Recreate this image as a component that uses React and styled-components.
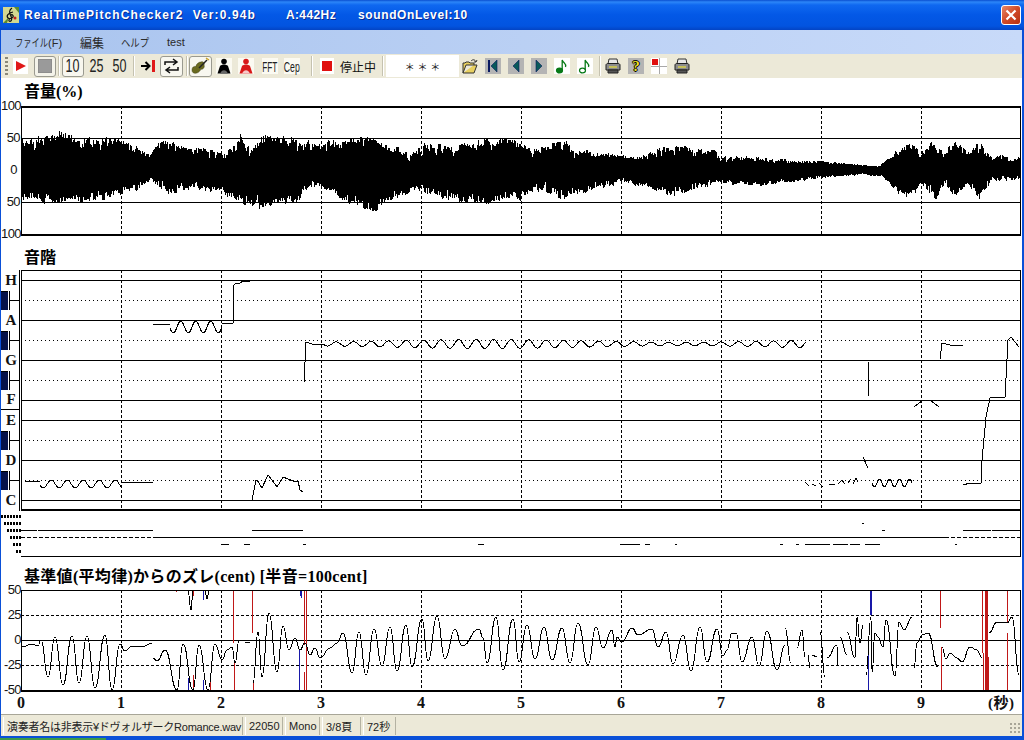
import React from 'react'
import styled, { createGlobalStyle } from 'styled-components'

const SERIF = '"Liberation Serif", "Noto Sans CJK JP", serif'
const SANS = '"Liberation Sans", "Noto Sans CJK JP", sans-serif'
const RED = '#c01818'
const BLUE = '#1818a8'

// envelope of the wave form, page coordinates [x, y]
const waveTop = [[21,140],[40,136],[60,131],[80,138],[100,137],[120,138],[140,146],[150,155],[160,138],[190,146],[210,149],[225,153],[240,134],[250,148],[265,133],[300,139],[323,141],[351,137],[369,135],[392,145],[411,153],[425,143],[448,145],[489,138],[517,137],[531,148],[563,140],[577,150],[614,153],[637,158],[660,147],[683,145],[715,151],[720,156],[762,158],[799,161],[821,161],[877,167],[886,160],[909,140],[923,152],[932,140],[944,153],[955,137],[967,153],[979,141],[992,158],[1002,153],[1011,160],[1020,156]]
const waveBottom = [[21,200],[60,205],[100,200],[140,190],[150,180],[170,195],[185,190],[220,192],[225,197],[245,205],[265,209],[300,202],[309,187],[318,190],[351,205],[367,212],[381,209],[411,192],[448,202],[489,204],[521,200],[535,190],[561,200],[586,192],[623,182],[674,197],[715,184],[762,185],[821,178],[863,174],[882,176],[905,202],[921,186],[937,200],[944,184],[955,202],[967,184],[979,199],[992,181],[1020,179]]

const pitchLines = [
  'M25 481H40', 'M122 482H153', 'M153 324H170',
  'M222 323H233L234 285L236 283H240L243 281H250',
  'M252 500L256 480H257L262 488L268 475L272 480L277 487L283 477L293 481H298L300 490L303 492',
  'M304 382L306 342L312 344L323 344',
  'M868 361L869 396', 'M914 407L923 400H930L939 407', 'M940 359L942 343L950 345H963',
  'M963 485L970 483H981L982 460L986 417L990 398L1005 397L1008 340L1011 337L1015 342L1019 347',
  'M863 457L868 468', 'M805 482L809 486M812 484L816 486M819 483L823 487M829 484H835M838 484L842 480L845 484M848 483L851 479M853 484L856 478L858 482',
]

const centLobes = [
  [[22,647],[32,644],[38,646],[41,640],[48,677],[55,637],[63,685],[72,636],[79,683],[87,636],[95,688],[105,635],[112,690],[120,644],[125,651],[132,646],[142,647],[152,643]],
  [[153,658],[157,661],[165,650],[177,690],[183,644],[193,690],[199,645],[208,690],[215,644],[222,660],[227,650],[232,647],[235,663],[239,641]],
  [[188,591],[191,610],[193,591]],
  [[205,591],[207,599],[209,591]],
  [[245,643],[250,642]],
  [[253,683],[258,632],[262,677],[269,613],[277,672],[283,626],[289,650],[295,638],[300,650],[305,643],[310,655],[315,648],[320,658],[330,648],[337,643],[343,633],[352,673],[359,632],[366,675],[374,629],[382,666],[390,627],[397,671],[406,625],[412,667],[422,619],[428,661],[437,616],[445,659],[455,629],[462,646],[479,629],[483,638],[487,663],[496,617],[503,670],[513,619],[519,662],[527,625],[535,659],[544,627],[552,660],[562,628],[570,663],[578,623],[588,665],[596,627],[603,648],[612,630],[615,647],[617,637],[622,642],[632,628],[638,635],[652,629],[658,647],[666,632],[673,664],[683,635],[691,671],[700,627],[707,662],[717,629],[723,656],[727,650],[732,633],[736,633],[742,662],[752,637],[759,666],[767,631],[777,670],[785,645]],
  [[785,628],[791,663]],
  [[797,648],[802,630],[805,657]],
  [[808,655],[810,668]],
  [[812,655],[817,657]],
  [[820,632],[825,677]],
  [[827,658],[837,645],[838,668]],
  [[840,637],[847,655]],
  [[847,632],[855,658],[857,617],[860,643],[863,625]],
  [[866,675],[871,617],[872,673],[875,633],[878,637],[883,647],[886,620],[895,676],[899,622],[904,630],[912,617]],
  [[914,668],[917,643],[922,635],[928,633],[938,667]],
  [[942,647],[946,659],[950,653],[957,658],[962,662],[970,647],[977,650],[982,658]],
  [[989,633],[997,622],[1007,623],[1012,617],[1019,675]],
]

// [x, y0, y1]
const redMarks = [[176,590,592],[177,688,690],[193,590,596],[193,675,690],[210,678,690],[233,590,643],[234,662,690],[252,590,633],[253,683,690],[304,590,645],[304,672,690],[306,590,690],[940,590,628],[941,647,690],[982,590,653],[983,653,690],[985,590,690],[986,590,690],[987,590,690],[988,657,690],[1007,590,622],[1007,633,690]]
const blueMarks = [[188,590,593],[188,678,690],[203,590,600],[203,680,690],[299,650,690],[300,590,596],[301,590,598],[870,590,615],[871,590,615],[868,640,690]]

const stripSolid = [[530,21,37],[530,38,153],[530,252,303],[530,963,991],[530,992,1020],[537,155,945],[523,862,864],[530,882,885],[544,221,229],[544,244,250],[544,303,306],[544,478,484],[544,620,640],[544,645,650],[544,675,677],[544,780,783],[544,796,799],[544,805,830],[544,833,848],[544,850,860],[544,865,880],[544,955,957]]

const interp = (table, x) => {
  for (let i = 1; i < table.length; i++) {
    if (x <= table[i][0]) {
      const [x0, y0] = table[i - 1]
      const [x1, y1] = table[i]
      return y0 + ((y1 - y0) * (x - x0)) / (x1 - x0)
    }
  }
  return table[table.length - 1][1]
}

const makeRandom = (seed) => () => {
  seed = (seed * 16807) % 2147483647
  return seed / 2147483647
}

const wavePath = () => {
  const rnd = makeRandom(4711)
  let d = ''
  let slowTop = 0
  let slowBot = 0
  for (let x = 22; x < 1021; x++) {
    const top = interp(waveTop, x)
    const bot = interp(waveBottom, x)
    const depth = Math.min(14, (bot - top) * 0.25)
    // a few pixels wide notches on top of the single pixel noise
    if (x % 3 === 0) {
      slowTop = rnd() * depth * 0.7
      slowBot = rnd() * depth * 0.7
    }
    const a = slowTop * 0.6 + rnd() * rnd() * depth * 0.7
    const b = slowBot * 0.6 + rnd() * rnd() * depth * 0.7
    d += `M${x + 0.5} ${Math.round(top + a - 1)}V${Math.round(bot - b + 1)}`
  }
  return d
}

const vibrato = (x0, x1, period, base, amp, phase = 0) => {
  let d = ''
  for (let x = x0; x <= x1; x++) {
    const a = typeof amp === 'function' ? amp(x) : amp
    const y = base + a * Math.sin(((x - x0) / period) * Math.PI * 2 + phase)
    d += `${d ? 'L' : 'M'}${x} ${y.toFixed(1)}`
  }
  return d
}

const lobes = (pts) => {
  let d = `M${pts[0][0]} ${pts[0][1]}`
  for (let i = 1; i < pts.length; i++) {
    const [x0, y0] = pts[i - 1]
    const [x1, y1] = pts[i]
    const m = (x0 + x1) / 2
    d += `C${m} ${y0} ${m} ${y1} ${x1} ${y1}`
  }
  return d
}

const seconds = [0, 1, 2, 3, 4, 5, 6, 7, 8, 9]
const timeLines = seconds.slice(1).map((n) => 21.5 + n * 100)

const GlobalStyle = createGlobalStyle`
  html, body { margin: 0; padding: 0; background: #fff; overflow: hidden; }
  #root { width: 1024px; height: 740px; }
`

const Window = styled.div`
  width: 1024px;
  height: 740px;
  display: flex;
  flex-direction: column;
  overflow: hidden;
  font-family: ${SANS};
  background: #0a50d8;
`

const TitleBar = styled.header`
  height: 30px;
  flex: none;
  display: flex;
  align-items: center;
  padding-left: 3px;
  color: #fff;
  font-size: 12px;
  font-weight: bold;
  text-shadow: 1px 1px 0 #0a2a90;
  background: linear-gradient(#0a4fd0 0, #2c86f8 2px, #0f68f0 5px, #0358e6 15px, #0254e0 26px, #0344c4 30px);
`

const TitleText = styled.span`
  margin-left: ${(p) => p.$ml}px;
  letter-spacing: ${(p) => p.$ls}px;
  white-space: nowrap;
`

const CloseButton = styled.div`
  margin-left: auto;
  margin-right: 3px;
  width: 20px;
  height: 20px;
  box-sizing: border-box;
  border: 1px solid #fff;
  border-radius: 3px;
  display: flex;
  align-items: center;
  justify-content: center;
  background: linear-gradient(135deg, #e88868, #d04a28 50%, #b83010);
`

const MenuBar = styled.nav`
  height: 24px;
  flex: none;
  box-sizing: border-box;
  margin: 0 2px 0 1px;
  display: flex;
  align-items: center;
  background: linear-gradient(90deg, #a9c4ee, #bdd2f5 60%, #c8daf9);
  color: #2a2a2a;
`

const MenuItem = styled.span`
  margin-left: ${(p) => p.$ml}px;
  font-size: ${(p) => p.$size || 11}px;
  white-space: nowrap;
`

// proportional kana of the original font: squeezed sideways
const Kana = styled.span`
  display: inline-block;
  transform: scaleX(${(p) => p.$sx});
  transform-origin: left center;
  margin-right: ${(p) => p.$mr}px;
`

const Toolbar = styled.div`
  height: 24px;
  flex: none;
  margin: 0 2px 0 1px;
  padding-left: 4px;
  display: flex;
  align-items: center;
  background: #ece9d8;
`

const Gripper = styled.div`
  width: 3px;
  height: 18px;
  background: repeating-linear-gradient(#8a8878 0 2px, transparent 2px 4px);
`

const Separator = styled.div`
  width: 1px;
  height: 20px;
  margin-left: ${(p) => p.$ml}px;
  margin-right: 1px;
  background: #c5c2b0;
  box-shadow: 1px 0 0 #fff;
`

const ToolButton = styled.div`
  width: ${(p) => p.$w || 16}px;
  height: ${(p) => (p.$outlined ? 21 : 16)}px;
  margin-left: ${(p) => p.$ml}px;
  box-sizing: border-box;
  flex: none;
  display: flex;
  align-items: center;
  justify-content: center;
  border: ${(p) => (p.$outlined ? '1px solid #9a9a90' : 0)};
  border-radius: ${(p) => (p.$outlined ? 3 : 0)}px;
  background: ${(p) => p.$bg || 'transparent'};
`

const NarrowText = styled.span`
  display: inline-block;
  font-size: ${(p) => p.$size || 19}px;
  color: #222;
  transform: scaleX(${(p) => p.$sx || 0.66});
  white-space: nowrap;
  font-weight: normal;
`

const StateLabel = styled.span`
  margin-left: ${(p) => p.$ml}px;
  width: 37px;
  font-size: 12px;
  color: #111;
  white-space: nowrap;
`

const Display = styled.div`
  width: 73px;
  height: 22px;
  margin-left: ${(p) => p.$ml}px;
  display: flex;
  align-items: center;
  justify-content: center;
  background: #fff;
  color: #222;
  font-size: 10px;
`

const HelpGlyph = styled.span`
  font: bold 15px ${SERIF};
  color: #f0e020;
  text-shadow: 1px 0 0 #000, -1px 0 0 #000, 0 1px 0 #000, 0 -1px 0 #000;
`

const Client = styled.main`
  flex: none;
  height: 636px;
  margin: 0 2px 0 1px;
  background: #fff;
  display: flex;
  flex-direction: column;
`

const SectionTitle = styled.h2`
  margin: 0;
  height: ${(p) => p.$h}px;
  flex: none;
  box-sizing: border-box;
  padding: ${(p) => p.$top}px 0 0 23px;
  font: bold 16px/18px ${SERIF};
  letter-spacing: ${(p) => p.$ls || 0}px;
  color: #000;
  white-space: nowrap;
`

const PlotRow = styled.div`
  display: flex;
  flex: none;
  height: ${(p) => p.$h}px;
`

const AxisColumn = styled.div`
  width: 20px;
  flex: none;
  height: ${(p) => p.$h + 14}px;
  margin-top: -7px;
  display: flex;
  flex-direction: column;
  justify-content: space-between;
  align-items: flex-end;
  font-size: 13px;
  line-height: 14px;
  color: #111;
  letter-spacing: -0.6px;
`

const AxisLabel = styled.span`
  display: block;
  margin-right: ${(p) => p.$mr || 0}px;
`

const Plot = styled.svg`
  display: block;
  width: 1001px;
  height: ${(p) => p.$h}px;
  flex: none;
  shape-rendering: crispEdges;
  overflow: hidden;
`

const KeyColumn = styled.div`
  width: 18px;
  flex: none;
  margin-right: 1px;
  border-right: 1px solid #000;
  display: flex;
  flex-direction: column;
`

const WhiteKey = styled.div`
  height: 20px;
  box-sizing: border-box;
  display: flex;
  align-items: center;
  justify-content: center;
  padding-left: 2px;
  font: bold 15px ${SERIF};
  color: #111;
  border-bottom: ${(p) => (p.$divider ? '1px solid #000' : 0)};
`

const BlackKey = styled.div`
  height: 20px;
  display: flex;
  align-items: center;
`

const KeyBody = styled.div`
  width: 7px;
  height: 19px;
  flex: none;
  background: #06124a;
  border-right: 1px solid #fff;
  box-shadow: 1px 0 0 #000, inset 0 1px 0 #000;
`

const KeyTick = styled.div`
  flex: 1;
  height: 1px;
  background: #000;
  margin-left: 1px;
`

const StepColumn = styled.div`
  width: 20px;
  flex: none;
  box-sizing: border-box;
  padding-top: 4px;
  display: flex;
  flex-direction: column;
  align-items: flex-end;
  gap: 4px;
`

const StepRow = styled.div`
  width: ${(p) => p.$w}px;
  height: 3px;
  background: repeating-linear-gradient(90deg, #000 0 2px, #fff 2px 3px);
`

const TimeAxis = styled.div`
  height: 22px;
  flex: none;
  display: flex;
  margin-left: -30px;
  padding-top: 2px;
  box-sizing: border-box;
  font: bold 16px/18px ${SERIF};
  color: #111;
`

const TimeLabel = styled.span`
  width: 100px;
  flex: none;
  text-align: center;
`

const UnitLabel = styled.span`
  margin-left: 17px;
  white-space: nowrap;
  font-size: 15px;
  letter-spacing: 0.5px;
`

const StatusBar = styled.footer`
  height: 22px;
  flex: none;
  margin: 0 2px 0 1px;
  padding: 2px 0 1px 2px;
  box-sizing: border-box;
  display: flex;
  gap: 2px;
  background: #ece9d8;
  border-top: 1px solid #a8a698;
  font-size: 11px;
  color: #222;
`

const StatusPanel = styled.div`
  width: ${(p) => p.$w}px;
  flex: none;
  box-sizing: border-box;
  padding-left: 3px;
  display: flex;
  align-items: center;
  white-space: nowrap;
  letter-spacing: ${(p) => p.$ls || 0}px;
  border-right: 1px solid #b4b2a2;
  border-left: 1px solid #fff;
`

const SizeGrip = styled.div`
  margin-left: auto;
  align-self: flex-end;
  width: 12px;
  height: 12px;
  background: radial-gradient(circle at 1px 1px, #a8a698 1px, transparent 1.2px) 0 0 / 4px 4px;
`

const WindowEdge = styled.div`
  flex: 1;
  display: flex;
  align-items: flex-end;
  background: #0a50d8;
`

const StartSliver = styled.div`
  width: 106px;
  height: 2px;
  background: #3c9a48;
`

const Note = ({ hollow }) => (
  <svg width="14" height="16" viewBox="0 0 14 16">
    <ellipse cx="4.5" cy="12.5" rx="3" ry="2.4" fill={hollow ? '#fff' : '#087a18'} stroke="#087a18" strokeWidth="1.2" />
    <path d="M7.2 12V2C8 5 12 5.5 10.5 9" fill="none" stroke="#087a18" strokeWidth="1.3" />
  </svg>
)

const Printer = () => (
  <svg width="16" height="16" viewBox="0 0 16 16">
    <path d="M4 1H12L13 6H3Z" fill="#e8e8e8" stroke="#333" />
    <path d="M1 7C1 6 2 5.500 3 5.500H13C14 5.500 15 6 15 7V12H1Z" fill="#8c8c8c" stroke="#222" />
    <path d="M3 12H13V15H3Z" fill="#555" stroke="#222" />
    <path d="M4 9H12" stroke="#d8d048" strokeWidth="1.5" />
  </svg>
)

const Person = ({ color, skirt }) => (
  <svg width="16" height="16" viewBox="0 0 16 16">
    <circle cx="8" cy="3.500" r="2.800" fill={color} />
    <path d="M1.500 15.500L4 8C6 6 10 6 12 8L14.500 15.500Z" fill={color} />
    <path d="M4 15.500C6 11 10 11 12 15.500Z" fill={skirt} />
  </svg>
)

const Nav = ({ d, bar }) => (
  <svg width="16" height="16" viewBox="0 0 16 16">
    {bar && <rect x="3" y="2" width="2" height="12" fill="#0a1a60" />}
    <path d={d} fill="#0a5a5a" stroke="#0a1a60" strokeWidth="0.6" />
  </svg>
)

const TitleIcon = () => (
  <svg width="16" height="16" viewBox="0 0 16 16">
    <rect width="16" height="16" fill="#d4d890" />
    <path d="M0 16L6 10L4 16ZM11 0H16V6Z" fill="#5a8a30" />
    <path d="M9 1C6 3 6 6 8 9C9 12 9 14 7 14.500C5 14 6 12 7 12M10 5C5 6 3 9 5 11C7 12.500 11 11 10 8.500C9 7 7 8 8 9.500" fill="none" stroke="#111" strokeWidth="1.200" />
    <circle cx="12" cy="11" r="1.500" fill="#c02020" />
  </svg>
)

const PlotFrame = ({ children, y0, h, frameTop, frameBottom }) => (
  <>
    {children}
    <path d={`M21.5 ${y0}V${y0 + h}M1020.500 ${y0}V${y0 + h}`} stroke="#000" />
    <rect x="21" y={frameTop[0]} width="1000" height={frameTop[1]} fill="#000" />
    <rect x="21" y={frameBottom[0]} width="1000" height={frameBottom[1]} fill="#000" />
  </>
)

const hLine = (y) => `M21 ${y + 0.5}H1021`

const wave = wavePath()
const amp = (x) => 3.2 + 1.4 * Math.sin(x / 62)

export default function App() {
  return (
    <Window>
      <GlobalStyle />
      <TitleBar>
        <TitleIcon />
        <TitleText $ml={5} $ls={1.1}>RealTimePitchChecker2</TitleText>
        <TitleText $ml={9} $ls={1.1}>Ver:0.94b</TitleText>
        <TitleText $ml={30} $ls={0.4}>A:442Hz</TitleText>
        <TitleText $ml={22} $ls={0.6}>soundOnLevel:10</TitleText>
        <CloseButton>
          <svg width="12" height="12" viewBox="0 0 12 12">
            <path d="M1.500 1.500L10.500 10.500M10.500 1.500L1.500 10.500" stroke="#fff" strokeWidth="2.200" />
          </svg>
        </CloseButton>
      </TitleBar>

      <MenuBar>
        <MenuItem $ml={14}><Kana $sx={0.75} $mr={-11}>ファイル</Kana>(F)</MenuItem>
        <MenuItem $ml={18} $size={12}>編集</MenuItem>
        <MenuItem $ml={17}><Kana $sx={0.85} $mr={-5}>ヘルプ</Kana></MenuItem>
        <MenuItem $ml={18}>test</MenuItem>
      </MenuBar>

      <Toolbar>
        <Gripper />
        <ToolButton $ml={5} $w={15} $bg="#fff">
          <svg width="12" height="12" viewBox="0 0 12 12"><path d="M1 1L11 6L1 11Z" fill="#e01818" /></svg>
        </ToolButton>
        <ToolButton $ml={6} $w={22} $outlined $bg="#f4f3ea">
          <svg width="14" height="14" viewBox="0 0 14 14"><rect width="14" height="14" fill="#9a9a9a" stroke="#808080" /></svg>
        </ToolButton>
        <Separator $ml={2} />
        <ToolButton $ml={2} $w={22} $outlined $bg="#f8f7ef"><NarrowText>10</NarrowText></ToolButton>
        <ToolButton $ml={3} $w={19}><NarrowText>25</NarrowText></ToolButton>
        <ToolButton $ml={4} $w={19}><NarrowText>50</NarrowText></ToolButton>
        <Separator $ml={4} />
        <ToolButton $ml={5}>
          <svg width="16" height="14" viewBox="0 0 16 14">
            <path d="M1 7H9M5.500 3L9.500 7L5.500 11" fill="none" stroke="#000" strokeWidth="2" />
            <rect x="12" y="1" width="3" height="12" fill="#e01818" />
          </svg>
        </ToolButton>
        <ToolButton $ml={4} $w={23} $outlined $bg="#f8f7ef">
          <svg width="17" height="16" viewBox="0 0 17 16">
            <path d="M2 7V4H13M10 1L14 4L10 7" fill="none" stroke="#111" strokeWidth="1.500" />
            <path d="M15 9V12H4M7 9L3 12L7 15" fill="none" stroke="#111" strokeWidth="1.500" />
          </svg>
        </ToolButton>
        <Separator $ml={3} />
        <ToolButton $ml={1} $w={23} $outlined $bg="#f8f7ef">
          <svg width="19" height="19" viewBox="0 0 19 19">
            <path d="M10 5C12 4 14 6 13 8C14 10 12 13 10 12C8 17 1 18 1 13C1 10 3 9 5 9.500C5 7 8 5 10 5Z" fill="#6a6a20" stroke="#3a3a10" strokeWidth="0.500" />
            <path d="M8 11L16 3" stroke="#222" strokeWidth="1.400" />
            <path d="M15 1L18 3" stroke="#c8a020" strokeWidth="1.400" />
          </svg>
        </ToolButton>
        <ToolButton $ml={4} $bg="#fbfaf2"><Person color="#000" skirt="#666" /></ToolButton>
        <ToolButton $ml={6} $bg="#fbfaf2"><Person color="#d81818" skirt="#f8c8c8" /></ToolButton>
        <ToolButton $ml={8} $bg="#fbfaf2"><NarrowText $size={15} $sx={0.55}>FFT</NarrowText></ToolButton>
        <ToolButton $ml={6} $bg="#fbfaf2"><NarrowText $size={15} $sx={0.58}>Cep</NarrowText></ToolButton>
        <Separator $ml={11} />
        <ToolButton $ml={7} $w={14} $bg="#fff">
          <svg width="10" height="10" viewBox="0 0 10 10"><rect width="10" height="10" fill="#e01010" /></svg>
        </ToolButton>
        <StateLabel $ml={6}>停止中</StateLabel>
        <Separator $ml={5} />
        <Display $ml={2}>＊ ＊ ＊</Display>
        <ToolButton $ml={3}>
          <svg width="16" height="15" viewBox="0 0 16 15">
            <path d="M1 14V4H3L4 3H7L8 4H12V6H4L1 14H12L15 6H12" fill="#e8d060" stroke="#333" />
            <path d="M9 2C11 0 13 0.500 14 3M14 3L15 1M14 3L12 3" fill="none" stroke="#333" />
          </svg>
        </ToolButton>
        <ToolButton $ml={7} $bg="#b4b4b4"><Nav bar d="M12 2V14L6 8Z" /></ToolButton>
        <ToolButton $ml={7} $bg="#b4b4b4"><Nav d="M11 2V14L5 8Z" /></ToolButton>
        <ToolButton $ml={7} $bg="#b4b4b4"><Nav d="M5 2V14L11 8Z" /></ToolButton>
        <ToolButton $ml={7} $bg="#fff"><Note /></ToolButton>
        <ToolButton $ml={7} $bg="#fff"><Note hollow /></ToolButton>
        <Separator $ml={6} />
        <ToolButton $ml={4}><Printer /></ToolButton>
        <ToolButton $ml={7} $bg="#b4b4b4"><HelpGlyph>?</HelpGlyph></ToolButton>
        <ToolButton $ml={7} $bg="#fff">
          <svg width="16" height="16" viewBox="0 0 16 16">
            <rect x="1" y="1" width="6" height="6" fill="#e01010" />
            <path d="M0 8.500H16M8.500 0V16" stroke="#a8a8a8" />
          </svg>
        </ToolButton>
        <ToolButton $ml={7}><Printer /></ToolButton>
      </Toolbar>

      <Client>
        <SectionTitle $h={28} $top={5}>音量(%)</SectionTitle>
        <PlotRow $h={130}>
          <AxisColumn $h={128}>
            <AxisLabel>100</AxisLabel>
            <AxisLabel $mr={1}>50</AxisLabel>
            <AxisLabel $mr={4}>0</AxisLabel>
            <AxisLabel $mr={1}>50</AxisLabel>
            <AxisLabel>100</AxisLabel>
          </AxisColumn>
          <Plot $h={130} viewBox="21 106 1001 130">
            <PlotFrame y0={106} h={130} frameTop={[106, 2]} frameBottom={[234, 2]}>
              <path d={`${hLine(138)}${hLine(202)}`} stroke="#000" />
              {timeLines.map((x) => <path key={x} d={`M${x} 106V235`} stroke="#000" strokeDasharray="3 2" />)}
              <path d={wave} stroke="#000" />
            </PlotFrame>
          </Plot>
        </PlotRow>

        <SectionTitle $h={34} $top={13}>音階</SectionTitle>
        <PlotRow $h={241}>
          <KeyColumn>
            <WhiteKey>H</WhiteKey>
            <BlackKey><KeyBody /><KeyTick /></BlackKey>
            <WhiteKey>A</WhiteKey>
            <BlackKey><KeyBody /><KeyTick /></BlackKey>
            <WhiteKey>G</WhiteKey>
            <BlackKey><KeyBody /><KeyTick /></BlackKey>
            <WhiteKey $divider>F</WhiteKey>
            <WhiteKey>E</WhiteKey>
            <BlackKey><KeyBody /><KeyTick /></BlackKey>
            <WhiteKey>D</WhiteKey>
            <BlackKey><KeyBody /><KeyTick /></BlackKey>
            <WhiteKey>C</WhiteKey>
          </KeyColumn>
          <Plot $h={241} viewBox="21 270 1001 241">
            <PlotFrame y0={270} h={241} frameTop={[270, 1]} frameBottom={[509, 2]}>
              <path d={[280, 320, 360, 400, 420, 460, 500].map(hLine).join('')} stroke="#000" />
              <path d={[300, 340, 380, 440, 480].map(hLine).join('')} stroke="#000" strokeDasharray="1 3" />
              {timeLines.map((x) => <path key={x} d={`M${x} 270V510`} stroke="#000" strokeDasharray="3 2" />)}
              <g fill="none" stroke="#000">
                {pitchLines.map((d) => <path key={d} d={d} />)}
                <path d={vibrato(40, 122, 16, 484, 4, Math.PI * 0.1)} />
                <path d={vibrato(170, 222, 15, 327, 6, 0.2)} />
                <path d={vibrato(323, 806, 17.5, 344, amp)} />
                <path d={vibrato(872, 912, 10, 483, 4)} />
              </g>
            </PlotFrame>
          </Plot>
        </PlotRow>

        <PlotRow $h={46}>
          <StepColumn>
            {[20, 17, 14, 11, 8, 5].map((w) => <StepRow key={w} $w={w} />)}
          </StepColumn>
          <Plot $h={46} viewBox="21 511 1001 46">
            <path d="M1020.500 511V557" stroke="#000" />
            <path d={hLine(556)} stroke="#000" />
            <path d="M21 537.500H155M945 537.500H1020" stroke="#000" strokeDasharray="4 2" />
            {stripSolid.map(([y, a, b]) => <path key={`${y}-${a}`} d={`M${a} ${y + 0.5}H${b}`} stroke="#000" />)}
          </Plot>
        </PlotRow>

        <SectionTitle $h={33} $top={11} $ls={0.3}>基準値(平均律)からのズレ(cent) [半音=100cent]</SectionTitle>
        <PlotRow $h={102}>
          <AxisColumn $h={100}>
            <AxisLabel>50</AxisLabel>
            <AxisLabel>25</AxisLabel>
            <AxisLabel>0</AxisLabel>
            <AxisLabel>-25</AxisLabel>
            <AxisLabel>-50</AxisLabel>
          </AxisColumn>
          <Plot $h={102} viewBox="21 590 1001 102">
            <PlotFrame y0={590} h={102} frameTop={[590, 1]} frameBottom={[690, 2]}>
              <path d={hLine(640)} stroke="#000" />
              <path d={`${hLine(615)}${hLine(665)}`} stroke="#000" strokeDasharray="3 2" />
              {timeLines.map((x) => <path key={x} d={`M${x} 590V691`} stroke="#000" strokeDasharray="3 2" />)}
              {redMarks.map(([x, a, b]) => <path key={`${x}-${a}`} d={`M${x + 0.5} ${a}V${b}`} stroke={RED} />)}
              {blueMarks.map(([x, a, b]) => <path key={`${x}-${a}`} d={`M${x + 0.5} ${a}V${b}`} stroke={BLUE} />)}
              <g fill="none" stroke="#000">
                {centLobes.map((pts) => <path key={`${pts[0]}`} d={lobes(pts)} />)}
              </g>
            </PlotFrame>
          </Plot>
        </PlotRow>

        <TimeAxis>
          {seconds.map((n) => <TimeLabel key={n}>{n}</TimeLabel>)}
          <UnitLabel>(秒)</UnitLabel>
        </TimeAxis>
      </Client>

      <StatusBar>
        <StatusPanel $w={240} $ls={-0.25}>演奏者名は非表示¥ドヴォルザークRomance.wav</StatusPanel>
        <StatusPanel $w={38}>22050</StatusPanel>
        <StatusPanel $w={35}>Mono</StatusPanel>
        <StatusPanel $w={39}>3/8頁</StatusPanel>
        <StatusPanel $w={33}>72秒</StatusPanel>
        <SizeGrip />
      </StatusBar>
      <WindowEdge><StartSliver /></WindowEdge>
    </Window>
  )
}
